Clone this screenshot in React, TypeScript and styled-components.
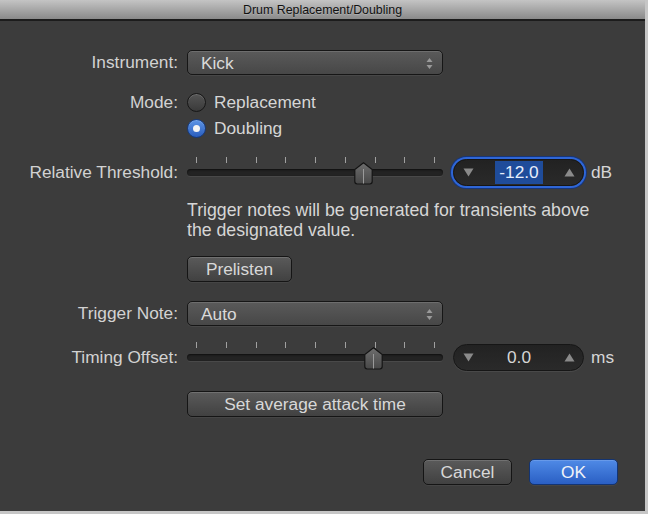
import React from 'react';
import styled, { createGlobalStyle } from 'styled-components';

const GlobalStyle = createGlobalStyle`
  html, body {
    margin: 0;
    padding: 0;
    background: #c6c6c6;
  }
  body {
    font-family: "Liberation Sans", Arial, sans-serif;
  }
`

const Window = styled.div`
  width: 645px;
  height: 511px;
  background: #3c3c3c;
  display: flex;
  flex-direction: column;
  overflow: hidden;
`

const TitleBar = styled.div`
  height: 19px;
  flex: none;
  background: linear-gradient(#c4c4c4, #8a8a8a);
  border-bottom: 2px solid #1c1c1c;
  display: flex;
  align-items: center;
  justify-content: center;
  font-size: 12.4px;
  color: #111;
  text-shadow: 0 1px 0 rgba(255,255,255,.2);
`

const Body = styled.div`
  flex: 1;
  display: flex;
  flex-direction: column;
  padding: 29px 27px 0 0;
  font-size: 17.3px;
  color: #d6d6d6;
`

const Row = styled.div<{ $gap?: number; $height?: number }>`
  display: flex;
  align-items: center;
  margin-top: ${p => p.$gap ?? 0}px;
  height: ${p => p.$height ?? 25}px;
`

const Label = styled.div`
  width: 178px;
  flex: none;
  text-align: right;
  padding-right: 9px;
  box-sizing: content-box;
  color: #d2d2d2;
`

const Popup = styled.div`
  width: 256px;
  height: 25px;
  box-sizing: border-box;
  border: 1px solid #161616;
  border-radius: 5px;
  background: linear-gradient(#5a5a5a, #474747);
  box-shadow: inset 0 1px 0 rgba(255,255,255,.12), 0 1px 0 rgba(255,255,255,.06);
  display: flex;
  align-items: center;
  justify-content: space-between;
  padding: 1px 9px 0 13px;
  color: #dadada;
`

const PopupArrows = () => (
  <svg width="7" height="13" viewBox="0 0 7 13">
    <path d="M3.5 1 L6.5 5 L0.5 5 Z" fill="#9a9a9a" />
    <path d="M3.5 12 L6.5 8 L0.5 8 Z" fill="#9a9a9a" />
  </svg>
)

const RadioLine = styled.label`
  display: flex;
  align-items: center;
  gap: 8px;
  color: #d6d6d6;
`

const RadioDot = styled.span<{ $on?: boolean }>`
  width: 19px;
  height: 19px;
  box-sizing: border-box;
  border-radius: 50%;
  border: 1px solid ${p => (p.$on ? '#163a7c' : '#161616')};
  background: ${p => (p.$on ? 'linear-gradient(#5d95e6, #2a5dbd)' : 'linear-gradient(#555, #3a3a3a)')};
  box-shadow: inset 0 1px 0 rgba(255,255,255,.15);
  display: flex;
  align-items: center;
  justify-content: center;

  &::after {
    content: '';
    width: 7px;
    height: 7px;
    border-radius: 50%;
    background: #f4f4f4;
    display: ${p => (p.$on ? 'block' : 'none')};
  }
`

const SliderBox = styled.div`
  position: relative;
  width: 256px;
  height: 32px;
  flex: none;
  display: flex;
  flex-direction: column;
  padding-top: 1px;
  box-sizing: border-box;
`

const Ticks = styled.div`
  display: flex;
  justify-content: space-between;
  padding: 0 8px 0 9px;
  height: 7px;
`

const Tick = styled.span`
  width: 1px;
  height: 6px;
  background: #a0a0a0;
`

const Track = styled.div`
  margin-top: 5px;
  height: 7px;
  border-radius: 4px;
  background: #232323;
  box-shadow: inset 0 1px 2px rgba(0,0,0,.6), 0 1px 0 rgba(255,255,255,.07);
`

const ThumbWrap = styled.div`
  position: absolute;
  top: 6px;
  width: 19px;
  height: 23px;
`

const Thumb = () => (
  <svg width="19" height="23" viewBox="0 0 19 23">
    <defs>
      <linearGradient id="thumbGrad" x1="0" y1="0" x2="0" y2="1">
        <stop offset="0" stopColor="#6e6e6e" />
        <stop offset="1" stopColor="#484848" />
      </linearGradient>
    </defs>
    <path
      d="M9.5 0.8 L18.2 7.6 L18.2 19.6 Q18.2 22 15.8 22 L3.2 22 Q0.8 22 0.8 19.6 L0.8 7.6 Z"
      fill="url(#thumbGrad)"
      stroke="#141414"
      strokeWidth="1.2"
    />
    <line x1="9.5" y1="7" x2="9.5" y2="21.5" stroke="#9a9a9a" strokeWidth="1" />
  </svg>
)

const Slider: React.FC<{ value: number }> = ({ value }) => (
  <SliderBox>
    <Ticks>
      {Array.from({ length: 9 }).map((_, i) => <Tick key={i} />)}
    </Ticks>
    <Track />
    <ThumbWrap style={{ left: value * 256 - 9.5 }}>
      <Thumb />
    </ThumbWrap>
  </SliderBox>
)

const Field = styled.div<{ $focused?: boolean }>`
  margin-left: 10px;
  width: 131px;
  height: 27px;
  box-sizing: border-box;
  border-radius: 14px;
  background: linear-gradient(#222, #2a2a2a);
  border: 1px solid #161616;
  box-shadow: ${p =>
    p.$focused
      ? '0 0 0 2px #2f66d6, 0 0 0 3px #17367a'
      : '0 1px 0 rgba(255,255,255,.07)'};
  display: flex;
  align-items: center;
  justify-content: space-between;
  padding: 0 8px 0 9px;
  color: #d6d6d6;
`

const FieldValue = styled.span<{ $selected?: boolean }>`
  padding: 1px 4px;
  background: ${p => (p.$selected ? '#1f4c9a' : 'transparent')};
  color: ${p => (p.$selected ? '#e8eefa' : '#d6d6d6')};
`

const Arrow: React.FC<{ dir: 'up' | 'down' }> = ({ dir }) => (
  <svg width="11" height="9" viewBox="0 0 11 9">
    {dir === 'up'
      ? <path d="M5.5 0.5 L10.5 8.5 L0.5 8.5 Z" fill="#8a8a8a" />
      : <path d="M5.5 8.5 L10.5 0.5 L0.5 0.5 Z" fill="#8a8a8a" />}
  </svg>
)

const Unit = styled.span`
  margin-left: 7px;
  color: #d6d6d6;
`

const Indented = styled.div<{ $gap?: number }>`
  margin-left: 187px;
  margin-top: ${p => p.$gap ?? 0}px;
`

const Note = styled(Indented)`
  font-size: 17.7px;
  line-height: 20px;
  color: #d6d6d6;
  width: 430px;
`

const Button = styled.button<{ $width: number; $primary?: boolean }>`
  width: ${p => p.$width}px;
  height: 26px;
  box-sizing: border-box;
  border-radius: 5px;
  border: 1px solid ${p => (p.$primary ? '#133472' : '#151515')};
  background: ${p => (p.$primary ? 'linear-gradient(#4f8ae6, #2a5fc4)' : 'linear-gradient(#5a5a5a, #414141)')};
  box-shadow: inset 0 1px 0 rgba(255,255,255,.14), 0 1px 0 rgba(255,255,255,.05);
  color: ${p => (p.$primary ? '#f0f3f8' : '#d8d8d8')};
  font-family: inherit;
  font-size: 17.3px;
  padding: 1px 0 0;
  display: flex;
  align-items: center;
  justify-content: center;
`

const Footer = styled.div`
  margin-top: 42px;
  display: flex;
  justify-content: flex-end;
  gap: 17px;
`

export default function App() {
  return (
    <>
      <GlobalStyle />
      <Window>
        <TitleBar>Drum Replacement/Doubling</TitleBar>
        <Body>
          <Row>
            <Label>Instrument:</Label>
            <Popup>
              <span>Kick</span>
              <PopupArrows />
            </Popup>
          </Row>

          <Row $gap={16} $height={22}>
            <Label>Mode:</Label>
            <RadioLine><RadioDot />Replacement</RadioLine>
          </Row>
          <Row $gap={4} $height={22}>
            <Label />
            <RadioLine><RadioDot $on />Doubling</RadioLine>
          </Row>

          <Row $gap={17} $height={32}>
            <Label>Relative Threshold:</Label>
            <Slider value={0.6875} />
            <Field $focused>
              <Arrow dir="down" />
              <FieldValue $selected>-12.0</FieldValue>
              <Arrow dir="up" />
            </Field>
            <Unit>dB</Unit>
          </Row>

          <Note $gap={12}>
            Trigger notes will be generated for transients above<br />
            the designated value.
          </Note>

          <Indented $gap={16}>
            <Button $width={105}>Prelisten</Button>
          </Indented>

          <Row $gap={19}>
            <Label>Trigger Note:</Label>
            <Popup>
              <span>Auto</span>
              <PopupArrows />
            </Popup>
          </Row>

          <Row $gap={15} $height={32}>
            <Label>Timing Offset:</Label>
            <Slider value={0.73} />
            <Field>
              <Arrow dir="down" />
              <FieldValue>0.0</FieldValue>
              <Arrow dir="up" />
            </Field>
            <Unit>ms</Unit>
          </Row>

          <Indented $gap={18}>
            <Button $width={256}>Set average attack time</Button>
          </Indented>

          <Footer>
            <Button $width={89}>Cancel</Button>
            <Button $width={89} $primary>OK</Button>
          </Footer>
        </Body>
      </Window>
    </>
  );
}
